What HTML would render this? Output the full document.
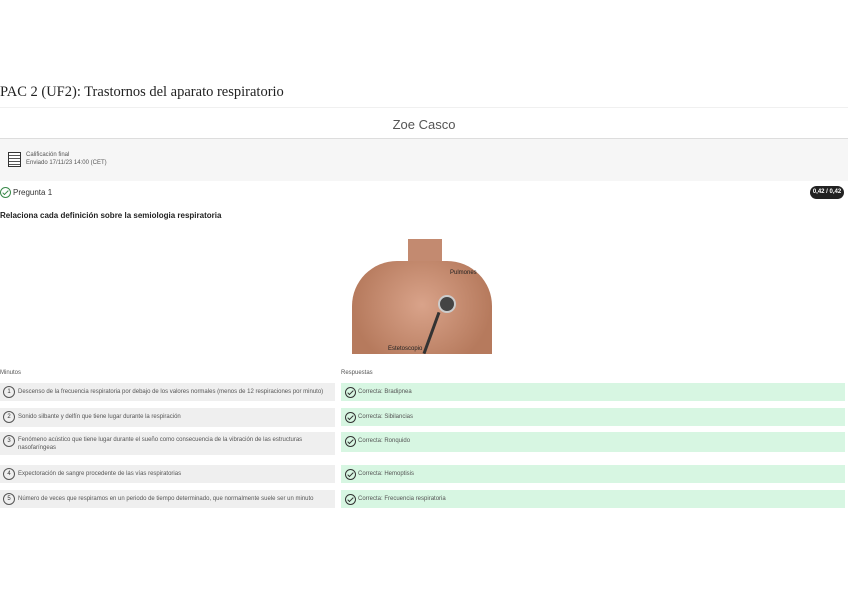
<!DOCTYPE html>
<html><head><meta charset="utf-8"><style>
body{margin:0;width:848px;height:599px;background:#fff;font-family:"Liberation Sans",sans-serif;color:#333;position:relative;overflow:hidden}
.a{position:absolute}
.t{font-size:6px;color:#555;white-space:nowrap}
.l{background:#efefef;left:0;width:335px}
.r{background:#d7f6e2;left:341px;width:504px}
.num{position:absolute;left:3px;top:3px;width:10px;height:10px;border:1px solid #555;border-radius:50%;font-size:6px;text-align:center;line-height:10px}
.ck{position:absolute;left:4px;top:4px;width:9px;height:9px;border:1px solid #333;border-radius:50%}
.ck:after{content:"";position:absolute;left:3px;top:1px;width:2px;height:5px;border:solid #333;border-width:0 1px 1px 0;transform:rotate(45deg)}
.g{border-color:#3a8a4a}.g:after{border-color:#3a8a4a}
</style></head><body>
<div class="a" style="top:84px;left:0;font-family:'Liberation Serif',serif;font-size:14.5px;color:#222">PAC 2 (UF2): Trastornos del aparato respiratorio</div>
<div class="a" style="top:107px;left:0;width:848px;border-top:1px solid #f0f0f0"></div>
<div class="a" style="top:117px;left:0;width:848px;text-align:center;font-size:13px;color:#555">Zoe Casco</div>
<div class="a" style="top:138px;left:0;width:848px;height:42px;background:#f6f6f6;border-top:1px solid #ddd"></div>
<div class="a" style="top:152px;left:8px;width:11px;height:13px;border:1px solid #333;background:repeating-linear-gradient(#fff 0 2px,#555 2px 3px)"></div>
<div class="a t" style="top:152px;left:26px">Calificación final</div>
<div class="a t" style="top:160px;left:26px">Enviado 17/11/23 14:00 (CET)</div>
<div class="a"><span class="ck g" style="left:0;top:187px"></span></div>
<div class="a" style="top:188px;left:13px;font-size:8px;color:#333">Pregunta 1</div>
<div class="a" style="top:186px;left:810px;width:34px;height:13px;background:#222;border-radius:7px;color:#fff;font-size:6px;text-align:center;line-height:13px;font-weight:bold">0,42 / 0,42</div>
<div class="a" style="top:211px;left:0;font-size:8px;font-weight:bold;color:#222">Relaciona cada definición sobre la semiologia respiratoria</div>
<div class="a" style="top:239px;left:350px;width:144px;height:115px;overflow:hidden;background:#fff">
<div class="a" style="left:58px;top:-5px;width:34px;height:40px;background:#c38a70"></div>
<div class="a" style="left:2px;top:22px;width:140px;height:110px;background:radial-gradient(ellipse at 50% 40%,#d9a38a,#b67a5d 70%);border-radius:45px 45px 0 0"></div>
<div class="a" style="left:88px;top:56px;width:14px;height:14px;border-radius:50%;background:#444;border:2px solid #ccc"></div>
<div class="a" style="left:80px;top:72px;width:3px;height:44px;background:#333;transform:rotate(20deg)"></div>
<div class="a" style="left:100px;top:31px;font-size:6px;color:#222">Pulmones</div>
<div class="a" style="left:38px;top:107px;font-size:6px;color:#222">Estetoscopio</div>
</div>
<div class="a t" style="top:370px;left:0">Minutos</div>
<div class="a t" style="top:370px;left:341px">Respuestas</div>

<div class="a l" style="top:383px;height:18px"><span class="num">1</span><span class="a t" style="left:18px;top:6px">Descenso de la frecuencia respiratoria por debajo de los valores normales (menos de 12 respiraciones por minuto)</span></div>
<div class="a r" style="top:383px;height:18px"><span class="ck"></span><span class="a t" style="left:17px;top:6px">Correcta: Bradipnea</span></div>

<div class="a l" style="top:408px;height:19px"><span class="num">2</span><span class="a t" style="left:18px;top:6px">Sonido silbante y delfín que tiene lugar durante la respiración</span></div>
<div class="a r" style="top:408px;height:18px"><span class="ck"></span><span class="a t" style="left:17px;top:6px">Correcta: Sibilancias</span></div>

<div class="a l" style="top:432px;height:23px"><span class="num">3</span><span class="a t" style="left:18px;top:5px">Fenómeno acústico que tiene lugar durante el sueño como consecuencia de la vibración de las estructuras</span><span class="a t" style="left:18px;top:13px">nasofaríngeas</span></div>
<div class="a r" style="top:432px;height:20px"><span class="ck"></span><span class="a t" style="left:17px;top:6px">Correcta: Ronquido</span></div>

<div class="a l" style="top:465px;height:18px"><span class="num">4</span><span class="a t" style="left:18px;top:6px">Expectoración de sangre procedente de las vías respiratorias</span></div>
<div class="a r" style="top:465px;height:18px"><span class="ck"></span><span class="a t" style="left:17px;top:6px">Correcta: Hemoptisis</span></div>

<div class="a l" style="top:490px;height:18px"><span class="num">5</span><span class="a t" style="left:18px;top:6px">Número de veces que respiramos en un periodo de tiempo determinado, que normalmente suele ser un minuto</span></div>
<div class="a r" style="top:490px;height:18px"><span class="ck"></span><span class="a t" style="left:17px;top:6px">Correcta: Frecuencia respiratoria</span></div>
</body></html>
